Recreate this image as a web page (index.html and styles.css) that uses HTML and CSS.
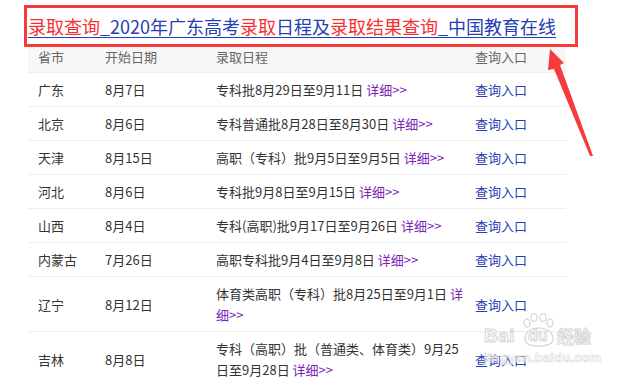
FILE: index.html
```html
<!DOCTYPE html>
<html lang="zh-CN">
<head>
<meta charset="utf-8">
<title>录取查询</title>
<link rel="stylesheet" href="styles.css">
</head>
<body>
<div class="page">
  <table class="sched">
    <colgroup>
      <col class="c1"><col class="c2"><col class="c3"><col class="c4">
    </colgroup>
    <thead>
      <tr><th>省市</th><th>开始日期</th><th class="t3">录取日程</th><th>查询入口</th></tr>
    </thead>
    <tbody>
      <tr><td>广东</td><td>8月7日</td><td class="t3">专科批8月29日至9月11日 <a class="more">详细&gt;&gt;</a></td><td><a class="go">查询入口</a></td></tr>
      <tr><td>北京</td><td>8月6日</td><td class="t3">专科普通批8月28日至8月30日 <a class="more">详细&gt;&gt;</a></td><td><a class="go">查询入口</a></td></tr>
      <tr><td>天津</td><td>8月15日</td><td class="t3">高职（专科）批9月5日至9月5日 <a class="more">详细&gt;&gt;</a></td><td><a class="go">查询入口</a></td></tr>
      <tr><td>河北</td><td>8月6日</td><td class="t3">专科批9月8日至9月15日 <a class="more">详细&gt;&gt;</a></td><td><a class="go">查询入口</a></td></tr>
      <tr><td>山西</td><td>8月4日</td><td class="t3">专科(高职)批9月17日至9月26日 <a class="more">详细&gt;&gt;</a></td><td><a class="go">查询入口</a></td></tr>
      <tr><td>内蒙古</td><td>7月26日</td><td class="t3">高职专科批9月4日至9月8日 <a class="more">详细&gt;&gt;</a></td><td><a class="go">查询入口</a></td></tr>
      <tr><td>辽宁</td><td>8月12日</td><td class="t3">体育类高职（专科）批8月25日至9月1日 <a class="more">详细&gt;&gt;</a></td><td><a class="go">查询入口</a></td></tr>
      <tr><td>吉林</td><td>8月8日</td><td class="t3">专科（高职）批（普通类、体育类）9月25日至9月28日 <a class="more">详细&gt;&gt;</a></td><td><a class="go">查询入口</a></td></tr>
    </tbody>
  </table>

  <div class="titlebox">
    <span class="title"><em>录取查询</em>_2020年广东高考<em>录取</em>日程及<em>录取结果查询</em>_中国教育在线</span>
  </div>

  <svg class="arrow" width="633" height="381" viewBox="0 0 633 381">
    <polygon points="550,49 564,63 560,65 593,156 590,156 554,69 548,70" fill="#f53b3b"/>
  </svg>

  <div class="mark">
    <div class="mark-logo">
      <span class="bai">Bai</span>
      <span class="paw">
        <svg width="36" height="34" viewBox="0 0 36 34">
          <g fill="none" stroke="#dcdcdc" stroke-width="1.5">
            <ellipse cx="6" cy="10" rx="3" ry="4"/>
            <ellipse cx="13" cy="4.5" rx="3" ry="4"/>
            <ellipse cx="22" cy="4.5" rx="3" ry="4"/>
            <ellipse cx="29" cy="10" rx="3" ry="4"/>
            <path d="M4 26 C4 18 11 15 17.5 15 C24 15 32 18 32 26 C32 32 24 33 17.5 33 C11 33 4 32 4 26 Z"/>
          </g>
        </svg>
        <span class="du">du</span>
      </span>
      <span class="jy">经验</span>
    </div>
    <div class="mark-url">jingyan.baidu.com</div>
  </div>
</div>
</body>
</html>
```

FILE: styles.css
```css
html, body {
  margin: 0;
  padding: 0;
  background: #fff;
}

.page {
  position: relative;
  width: 633px;
  height: 381px;
  overflow: hidden;
  padding: 40px 0 0 28px;
  box-sizing: border-box;
  font-family: "Noto Sans CJK SC", "Noto Sans", sans-serif;
  font-size: 13px;
  color: #333;
}

.sched {
  width: 538px;
  border-collapse: collapse;
  table-layout: fixed;
}

.c1 { width: 67px; }
.c2 { width: 111px; }
.c3 { width: 259px; }
.c4 { width: 101px; }

.sched th {
  height: 32px;
  padding: 0 0 0 10px;
  background: #f7f7f7;
  color: #666;
  font-weight: normal;
  text-align: left;
  line-height: 21px;
  border-bottom: 1px solid #eee;
}

.sched td {
  padding: 6px 0 6px 10px;
  line-height: 21px;
  border-bottom: 1px solid #eee;
  vertical-align: middle;
}

.sched td.t3 {
  padding-right: 0;
}

.more {
  color: #7b23b8;
}

.go {
  color: #2440b3;
}

.titlebox {
  position: absolute;
  left: 24px;
  top: 5px;
  width: 547px;
  height: 36px;
  border: 3px solid #f53b3b;
  background: #fff;
  padding-left: 1px;
  display: flex;
  align-items: center;
}

.title {
  font-size: 18px;
  color: #2440b3;
  text-decoration-line: underline;
  text-decoration-thickness: 1px;
  text-underline-offset: 3px;
  white-space: nowrap;
  line-height: 24px;
}

.title em {
  font-style: normal;
  color: #f73131;
}

.arrow {
  position: absolute;
  left: 0;
  top: 0;
  pointer-events: none;
}

.mark {
  position: absolute;
  left: 484px;
  top: 313px;
  font-family: "Liberation Sans", "Noto Sans CJK SC", sans-serif;
  font-weight: bold;
  color: rgba(255, 255, 255, 0.5);
}

.mark-logo {
  display: flex;
  align-items: flex-end;
  height: 34px;
}

.bai {
  font-size: 19px;
  line-height: 22px;
  letter-spacing: 0.5px;
  -webkit-text-stroke: 1px #d6d6d6;
}

.paw {
  position: relative;
  width: 36px;
  height: 34px;
  margin-left: 6px;
}

.paw svg {
  display: block;
}

.du {
  position: absolute;
  left: 7px;
  bottom: 2px;
  font-size: 16px;
  line-height: 18px;
  -webkit-text-stroke: 1px #d6d6d6;
}

.jy {
  font-family: "Noto Sans CJK SC", sans-serif;
  font-size: 17px;
  line-height: 22px;
  margin-left: 0;
  -webkit-text-stroke: 1px #d6d6d6;
}

.mark-url {
  font-size: 13px;
  line-height: 16px;
  margin-top: 3px;
  letter-spacing: 0.2px;
  -webkit-text-stroke: 0.7px #dcdcdc;
}
```
